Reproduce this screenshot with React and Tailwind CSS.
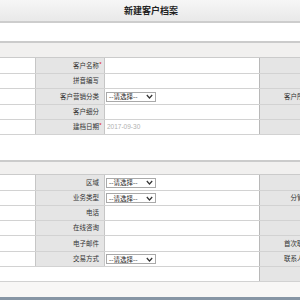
import React from 'react';

const Select = () => (
    <div className="flex items-center h-[10px] w-[50px] border border-[#a9a9a9] bg-white pl-[2px] pr-[2px] text-[6.5px] leading-none text-[#222]">
        <span className="flex-1">--请选择--</span>
        <svg width="7" height="5" viewBox="0 0 7 5">
            <polyline points="0.8,1 3.5,4 6.2,1" fill="none" stroke="#333" strokeWidth="1.2" />
        </svg>
    </div>
);

const Label = ({ text, req }) => (
    <div className="w-[69px] shrink-0 h-full bg-[#e5e5e5] border-r border-[#c6c6c6] flex items-center justify-end pr-[5px] text-[6.5px] text-[#333]">
        <span className="relative">
            {text}
            {req && <span className="absolute left-full top-[-1px] text-[#e02020] text-[6px]">*</span>}
        </span>
    </div>
);

const Row = ({ h, label, req, input, right, blank }) => (
    <div className="flex w-[400px] border-b border-[#d2d2d2]" style={{ height: h }}>
        {blank ? (
            <div className="w-[260px] shrink-0 h-full bg-white border-r border-[#b8b8b8]" />
        ) : (
            <>
                <div className="w-[36px] shrink-0 h-full bg-white border-r border-[#c6c6c6]" />
                <Label text={label} req={req} />
                <div className="w-[155px] shrink-0 h-full bg-white border-r border-[#b8b8b8] flex items-center pl-[1px]">
                    {input}
                </div>
            </>
        )}
        <Label text={right || ''} />
    </div>
);

const SectionHead = ({ h }) => (
    <div className="border-t-2 border-b border-[#cbcbcb] bg-[#f1f0ef]" style={{ height: h }} />
);

export default function App() {
    return (
        <div className="w-[300px] h-[300px] overflow-hidden bg-white flex flex-col font-['Noto_Sans_CJK_SC',sans-serif]">
            <div className="h-[23px] shrink-0 bg-gradient-to-b from-[#f6f6f6] to-[#e9e9e9] border-b-2 border-[#cdcdcd] flex items-center justify-center">
                <span className="text-[9px] font-bold text-[#222] ml-[2px]">新建客户档案</span>
            </div>
            <div className="h-[18px] shrink-0" />
            <SectionHead h={17} />
            <Row h={16} label="客户名称" req />
            <Row h={15} label="拼音编写" />
            <Row h={16} label="客户营销分类" input={<Select />} right="客户所属区域" />
            <Row h={15} label="客户细分" />
            <Row h={15} label="建档日期" req input={<span className="ml-[1px] text-[6.5px] text-[#b0b0b0] font-['Liberation_Sans',sans-serif]">2017-09-30</span>} />
            <div className="h-[25px] shrink-0" />
            <SectionHead h={15} />
            <Row h={16} label="区域" input={<Select />} />
            <Row h={15} label="业务类型" input={<Select />} right="分管业务员" />
            <Row h={15} label="电话" />
            <Row h={15} label="在线咨询" />
            <Row h={16} label="电子邮件" right="首次联系时间" />
            <Row h={15} label="交易方式" input={<Select />} right="联系人手机号" />
            <Row h={15} blank />
            <div className="flex-1 bg-[#f8f7f6]" />
            <div className="h-[3px] shrink-0 bg-[#8796a5]" />
        </div>
    );
}
